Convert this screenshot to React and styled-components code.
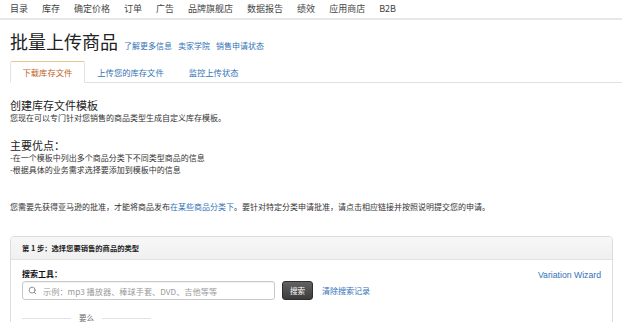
import React from "react";
import styled, { createGlobalStyle } from "styled-components";
import { Search } from "lucide-react";

const Global = createGlobalStyle`
  html, body { margin: 0; padding: 0; background: #fff; }
  body {
    font-family: "Liberation Sans", "Noto Sans CJK SC", sans-serif;
    color: #333;
    -webkit-font-smoothing: antialiased;
  }
  * { box-sizing: border-box; }
`;

const CJK = `"Noto Sans CJK SC", "Liberation Sans", sans-serif`;

const Nav = styled.nav`
  display: flex;
  align-items: center;
  gap: 14px;
  height: 20px;
  padding: 0 10px 1px;
  border-bottom: 2px solid #e8e8e8;
  font-family: ${CJK};
  font-size: 9px;
  line-height: 12px;
  color: #444;
`;

const NavItem = styled.span`
  white-space: nowrap;
`;

const Page = styled.main`
  padding: 0 9px 0 10px;
`;

const TitleRow = styled.div`
  display: flex;
  align-items: baseline;
  gap: 6px;
  margin-top: 9px;
`;

const Title = styled.h1`
  margin: 0;
  font-family: ${CJK};
  font-weight: 400;
  font-size: 18px;
  line-height: 24px;
  color: #222;
`;

const Link = styled.a`
  font-family: ${CJK};
  font-size: ${(p) => p.$size || 8}px;
  color: #3372b8;
  text-decoration: none;
  white-space: nowrap;
  cursor: pointer;
`;

const Tabs = styled.div`
  display: flex;
  margin-top: 8px;
  margin-right: -9px;
  border-bottom: 1px solid #e0e0e0;
`;

const Tab = styled.div`
  height: 22px;
  padding: 0 11.5px;
  display: flex;
  align-items: center;
  font-family: ${CJK};
  font-size: 8.3px;
  white-space: nowrap;
  margin-bottom: -1px;
  color: ${(p) => (p.$active ? "#c0601c" : "#3372b8")};
  background: ${(p) => (p.$active ? "#fff" : "transparent")};
  border: 1px solid ${(p) => (p.$active ? "#e2e2e2" : "transparent")};
  border-top: 1px solid ${(p) => (p.$active ? "#eec48e" : "transparent")};
  border-bottom: 1px solid ${(p) => (p.$active ? "#fff" : "transparent")};
  border-radius: 2px 2px 0 0;
`;

const Section = styled.section`
  margin-top: ${(p) => p.$top || 0}px;
  font-family: ${CJK};
`;

const Heading = styled.h2`
  margin: 0;
  font-weight: 400;
  font-size: 11px;
  line-height: 14px;
  color: #222;
`;

const Text = styled.p`
  margin: 0;
  font-size: 8px;
  line-height: 12px;
  color: #333;
  white-space: nowrap;
`;

const Panel = styled.div`
  margin-top: 23px;
  border: 1px solid #dcdcdc;
  border-radius: 4px;
  font-family: ${CJK};
  overflow: hidden;
`;

const PanelHeader = styled.div`
  height: 23px;
  display: flex;
  align-items: center;
  padding: 0 11px;
  background: linear-gradient(#f7f7f7, #f0f0f0);
  border-bottom: 1px solid #e2e2e2;
  font-size: 7.3px;
  font-weight: 700;
  color: #222;
`;

const PanelBody = styled.div`
  display: flex;
  justify-content: space-between;
  align-items: flex-start;
  padding: 8px 11px 0;
  height: 70px;
`;

const SearchCol = styled.div`
  display: flex;
  flex-direction: column;
`;

const Label = styled.label`
  font-size: 8px;
  font-weight: 700;
  line-height: 12px;
  color: #111;
`;

const SearchRow = styled.div`
  display: flex;
  align-items: center;
  margin-top: 1px;
`;

const InputBox = styled.div`
  width: 253px;
  height: 19px;
  display: flex;
  align-items: center;
  gap: 6px;
  padding-left: 5px;
  border: 1px solid #c9c9c9;
  border-radius: 3px;
  box-shadow: inset 0 1px 1px rgba(0, 0, 0, 0.06);
  color: #8a8a8a;
`;

const Input = styled.input`
  flex: 1;
  min-width: 0;
  border: 0;
  outline: 0;
  padding: 0;
  background: transparent;
  font-family: ${CJK};
  font-size: 8.2px;
  color: #333;
  &::placeholder { color: #9a9a9a; }
`;

const Button = styled.button`
  margin-left: 7px;
  width: 31px;
  height: 19px;
  padding: 0;
  border: 1px solid #2e2e2e;
  border-radius: 3px;
  background: linear-gradient(#626262, #3c3c3c);
  color: #fff;
  font-family: ${CJK};
  font-size: 7.5px;
  cursor: pointer;
`;

const ClearLink = styled(Link)`
  margin-left: 9px;
`;

const Divider = styled.div`
  display: flex;
  align-items: center;
  gap: 8px;
  width: 129px;
  margin-top: 12px;
  font-size: 7.5px;
  line-height: 12px;
  color: #666;
  &::before, &::after {
    content: "";
    flex: 1;
    height: 1px;
    background: #e2e2e2;
  }
`;

const Wizard = styled.a`
  margin-top: 1px;
  font-family: "Liberation Sans", sans-serif;
  font-size: 8.7px;
  line-height: 12px;
  color: #3372b8;
  cursor: pointer;
`;

const navItems = ["目录", "库存", "确定价格", "订单", "广告", "品牌旗舰店", "数据报告", "绩效", "应用商店", "B2B"];

export default function App() {
  return (
    <>
      <Global />
      <Nav>
        {navItems.map((n) => (
          <NavItem key={n}>{n}</NavItem>
        ))}
      </Nav>
      <Page>
        <TitleRow>
          <Title>批量上传商品</Title>
          <Link>了解更多信息</Link>
          <Link>卖家学院</Link>
          <Link>销售申请状态</Link>
        </TitleRow>
        <Tabs>
          <Tab $active>下载库存文件</Tab>
          <Tab>上传您的库存文件</Tab>
          <Tab>监控上传状态</Tab>
        </Tabs>
        <Section $top={15}>
          <Heading>创建库存文件模板</Heading>
          <Text>您现在可以专门针对您销售的商品类型生成自定义库存模板。</Text>
        </Section>
        <Section $top={14}>
          <Heading>主要优点：</Heading>
          <Text>-在一个模板中列出多个商品分类下不同类型商品的信息</Text>
          <Text>-根据具体的业务需求选择要添加到模板中的信息</Text>
        </Section>
        <Section $top={25}>
          <Text>
            您需要先获得亚马逊的批准，才能将商品发布<Link>在某些商品分类下</Link>。要针对特定分类申请批准，请点击相应链接并按照说明提交您的申请。
          </Text>
        </Section>
        <Panel>
          <PanelHeader>第 1 步：选择您要销售的商品的类型</PanelHeader>
          <PanelBody>
            <SearchCol>
              <Label>搜索工具：</Label>
              <SearchRow>
                <InputBox>
                  <Search size={9} strokeWidth={2.5} />
                  <Input placeholder="示例：mp3 播放器、棒球手套、DVD、吉他等等" />
                </InputBox>
                <Button>搜索</Button>
                <ClearLink>清除搜索记录</ClearLink>
              </SearchRow>
              <Divider>要么</Divider>
            </SearchCol>
            <Wizard>Variation Wizard</Wizard>
          </PanelBody>
        </Panel>
      </Page>
    </>
  );
}
